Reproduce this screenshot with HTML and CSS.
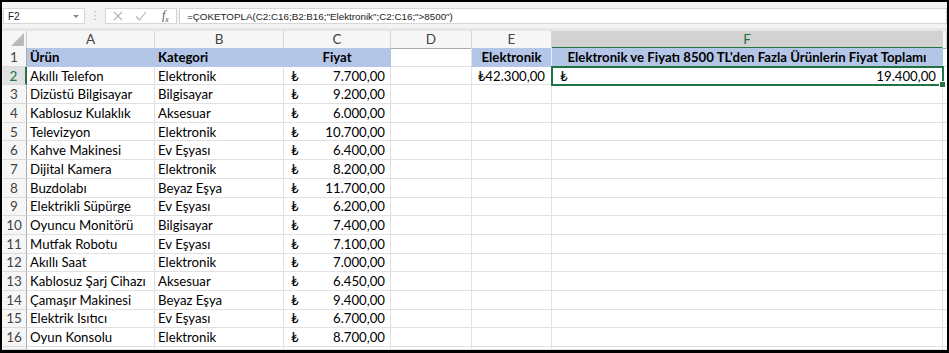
FILE: index.html
```html
<!DOCTYPE html>
<html lang="tr">
<head>
    <meta charset="UTF-8">
    <meta name="viewport" content="width=device-width, initial-scale=1.0">
    <title>ÇOKETOPLA</title>
    <link rel="stylesheet" href="styles.css">
</head>
<body>
<div class="window">
    <div class="formulaBar">
        <div class="nameBox"><span>F2</span><span class="arrow"></span></div>
        <div class="grip">⋮</div>
        <div class="fxBox">
            <svg class="btn" width="10" height="10" viewBox="0 0 10 10"><path d="M1 1 L9 9 M9 1 L1 9" stroke="#b3b3b3" stroke-width="1.1" fill="none"/></svg>
            <svg class="btn" width="12" height="10" viewBox="0 0 12 10"><path d="M1 5.5 L4.5 9 L11 1" stroke="#b3b3b3" stroke-width="1.1" fill="none"/></svg>
            <span class="fx"><i>f</i><sub>x</sub></span>
        </div>
        <div class="formula">=ÇOKETOPLA(C2:C16;B2:B16;"Elektronik";C2:C16;"&gt;8500")</div>
    </div>

    <div class="sheet">
        <div class="row head">
            <div class="corner"><svg width="13" height="13" viewBox="0 0 13 13"><polygon points="13,0 13,13 0,13" fill="#b9b9b9"/></svg></div>
            <div class="colHead">A</div>
            <div class="colHead">B</div>
            <div class="colHead">C</div>
            <div class="colHead">D</div>
            <div class="colHead">E</div>
            <div class="colHead sel">F</div>
            <div class="colHead"></div>
        </div>

        <div class="row">
            <div class="rowHead">1</div>
            <div class="cell fill bold">Ürün</div>
            <div class="cell fill bold">Kategori</div>
            <div class="cell fill bold center">Fiyat</div>
            <div class="cell"></div>
            <div class="cell fill bold center seam">Elektronik</div>
            <div class="cell fill bold center">Elektronik ve Fiyatı 8500 TL'den Fazla Ürünlerin Fiyat Toplamı</div>
            <div class="cell"></div>
        </div>
        <div class="row">
            <div class="rowHead sel">2</div>
            <div class="cell">Akıllı Telefon</div>
            <div class="cell">Elektronik</div>
            <div class="cell money"><span>₺</span><span>7.700,00</span></div>
            <div class="cell"></div>
            <div class="cell right">₺42.300,00</div>
            <div class="cell money active"><span>₺</span><span>19.400,00</span></div>
            <div class="cell"></div>
        </div>
        <div class="row">
            <div class="rowHead">3</div>
            <div class="cell">Dizüstü Bilgisayar</div>
            <div class="cell">Bilgisayar</div>
            <div class="cell money"><span>₺</span><span>9.200,00</span></div>
            <div class="cell"></div><div class="cell"></div><div class="cell"></div><div class="cell"></div>
        </div>
        <div class="row">
            <div class="rowHead">4</div>
            <div class="cell">Kablosuz Kulaklık</div>
            <div class="cell">Aksesuar</div>
            <div class="cell money"><span>₺</span><span>6.000,00</span></div>
            <div class="cell"></div><div class="cell"></div><div class="cell"></div><div class="cell"></div>
        </div>
        <div class="row">
            <div class="rowHead">5</div>
            <div class="cell">Televizyon</div>
            <div class="cell">Elektronik</div>
            <div class="cell money"><span>₺</span><span>10.700,00</span></div>
            <div class="cell"></div><div class="cell"></div><div class="cell"></div><div class="cell"></div>
        </div>
        <div class="row">
            <div class="rowHead">6</div>
            <div class="cell">Kahve Makinesi</div>
            <div class="cell">Ev Eşyası</div>
            <div class="cell money"><span>₺</span><span>6.400,00</span></div>
            <div class="cell"></div><div class="cell"></div><div class="cell"></div><div class="cell"></div>
        </div>
        <div class="row">
            <div class="rowHead">7</div>
            <div class="cell">Dijital Kamera</div>
            <div class="cell">Elektronik</div>
            <div class="cell money"><span>₺</span><span>8.200,00</span></div>
            <div class="cell"></div><div class="cell"></div><div class="cell"></div><div class="cell"></div>
        </div>
        <div class="row">
            <div class="rowHead">8</div>
            <div class="cell">Buzdolabı</div>
            <div class="cell">Beyaz Eşya</div>
            <div class="cell money"><span>₺</span><span>11.700,00</span></div>
            <div class="cell"></div><div class="cell"></div><div class="cell"></div><div class="cell"></div>
        </div>
        <div class="row">
            <div class="rowHead">9</div>
            <div class="cell">Elektrikli Süpürge</div>
            <div class="cell">Ev Eşyası</div>
            <div class="cell money"><span>₺</span><span>6.200,00</span></div>
            <div class="cell"></div><div class="cell"></div><div class="cell"></div><div class="cell"></div>
        </div>
        <div class="row">
            <div class="rowHead">10</div>
            <div class="cell">Oyuncu Monitörü</div>
            <div class="cell">Bilgisayar</div>
            <div class="cell money"><span>₺</span><span>7.400,00</span></div>
            <div class="cell"></div><div class="cell"></div><div class="cell"></div><div class="cell"></div>
        </div>
        <div class="row">
            <div class="rowHead">11</div>
            <div class="cell">Mutfak Robotu</div>
            <div class="cell">Ev Eşyası</div>
            <div class="cell money"><span>₺</span><span>7.100,00</span></div>
            <div class="cell"></div><div class="cell"></div><div class="cell"></div><div class="cell"></div>
        </div>
        <div class="row">
            <div class="rowHead">12</div>
            <div class="cell">Akıllı Saat</div>
            <div class="cell">Elektronik</div>
            <div class="cell money"><span>₺</span><span>7.000,00</span></div>
            <div class="cell"></div><div class="cell"></div><div class="cell"></div><div class="cell"></div>
        </div>
        <div class="row">
            <div class="rowHead">13</div>
            <div class="cell">Kablosuz Şarj Cihazı</div>
            <div class="cell">Aksesuar</div>
            <div class="cell money"><span>₺</span><span>6.450,00</span></div>
            <div class="cell"></div><div class="cell"></div><div class="cell"></div><div class="cell"></div>
        </div>
        <div class="row">
            <div class="rowHead">14</div>
            <div class="cell">Çamaşır Makinesi</div>
            <div class="cell">Beyaz Eşya</div>
            <div class="cell money"><span>₺</span><span>9.400,00</span></div>
            <div class="cell"></div><div class="cell"></div><div class="cell"></div><div class="cell"></div>
        </div>
        <div class="row">
            <div class="rowHead">15</div>
            <div class="cell">Elektrik Isıtıcı</div>
            <div class="cell">Ev Eşyası</div>
            <div class="cell money"><span>₺</span><span>6.700,00</span></div>
            <div class="cell"></div><div class="cell"></div><div class="cell"></div><div class="cell"></div>
        </div>
        <div class="row">
            <div class="rowHead">16</div>
            <div class="cell">Oyun Konsolu</div>
            <div class="cell">Elektronik</div>
            <div class="cell money"><span>₺</span><span>8.700,00</span></div>
            <div class="cell"></div><div class="cell"></div><div class="cell"></div><div class="cell"></div>
        </div>
        <div class="row tail">
            <div class="rowHead"></div>
            <div class="cell"></div><div class="cell"></div><div class="cell"></div><div class="cell"></div>
            <div class="cell"></div><div class="cell"></div><div class="cell"></div>
        </div>
    </div>
</div>
</body>
</html>
```

FILE: styles.css
```css
body{
    margin: 0;
    font-family: Lato, "DejaVu Sans", sans-serif;
    color: #000;
}

.window{
    width: 949px;
    height: 353px;
    box-sizing: border-box;
    border: 2px solid #000;
    border-bottom-width: 3px;
    display: flex;
    flex-direction: column;
    overflow: hidden;
    background-color: #fff;
}

/* formula bar */
.formulaBar{
    height: 29px;
    flex: none;
    box-sizing: border-box;
    padding: 6px 0 0 1px;
    background-color: #f3f3f3;
    border-bottom: 3px solid #e6e6e6;
    display: flex;
    align-items: flex-start;
    font-family: "Liberation Sans", Arial, sans-serif;
    font-size: 10px;
    color: #222;
}

.nameBox, .fxBox, .formula{
    height: 16px;
    box-sizing: border-box;
    background-color: #fff;
    border: 1px solid #d6d6d6;
    display: flex;
    align-items: center;
}

.nameBox{
    width: 82px;
    padding: 0 5px 0 4px;
    justify-content: space-between;
}

.arrow{
    width: 0;
    height: 0;
    border-left: 3px solid transparent;
    border-right: 3px solid transparent;
    border-top: 3px solid #8a8a8a;
}

.grip{
    width: 20px;
    text-align: center;
    color: #b5b5b5;
    font-family: "DejaVu Sans", sans-serif;
    font-size: 11px;
    line-height: 16px;
}

.fxBox{
    width: 72px;
    padding-left: 7px;
    gap: 12px;
}

.fx{
    font-family: "Liberation Serif", serif;
    font-size: 12px;
    color: #555;
    margin-left: 3px;
}

.fx sub{
    font-size: 8px;
    font-style: italic;
}

.formula{
    flex: 1;
    margin-left: 2px;
    padding-left: 7px;
    font-size: 9.8px;
}

/* sheet */
.sheet{
    flex: 1;
    display: flex;
    flex-direction: column;
}

.row{
    display: grid;
    grid-template-columns: 25px 128px 129px 107px 81px 80px 391px 1fr;
    height: 18.7px;
    flex: none;
}

.row.head{
    height: 17px;
}

.row.tail{
    flex: 1;
}

.corner, .colHead, .rowHead{
    background-color: #f6f6f6;
    color: #444;
    font-size: 13.5px;
    box-sizing: border-box;
}

.corner{
    border-right: 1px solid #d0d0d0;
    border-bottom: 1px solid #ababab;
    display: flex;
    align-items: flex-end;
    justify-content: flex-end;
    padding: 0 2px 2px 0;
}

.colHead{
    border-right: 1px solid #d4d4d4;
    border-bottom: 1px solid #ababab;
    text-align: center;
    line-height: 16px;
}

.colHead.sel{
    background-color: #d2d2d2;
    color: #217346;
    border-bottom: 2px solid #217346;
}

.rowHead{
    border-right: 1px solid #ababab;
    border-bottom: 1px solid #dadada;
    text-align: center;
    display: flex;
    align-items: center;
    justify-content: center;
}

.rowHead.sel{
    background-color: #e1e1e1;
    color: #217346;
    border-right: 2px solid #217346;
}

.cell{
    box-sizing: border-box;
    border-right: 1px solid #e1e1e1;
    border-bottom: 1px solid #e1e1e1;
    padding: 0 3px;
    font-size: 13.2px;
    white-space: nowrap;
    overflow: hidden;
    display: flex;
    align-items: center;
}

.fill{
    background-color: #b4c6e7;
    border-color: #b4c6e7;
}

.fill.seam{
    border-right-color: #e4e9f3;
}

.bold{
    font-weight: bold;
}

.center{
    justify-content: center;
}

.right{
    justify-content: flex-end;
    padding-right: 6px;
}

.money{
    justify-content: space-between;
    padding: 0 5px 0 7px;
}

.active{
    position: relative;
    overflow: visible;
    outline: 2px solid #217346;
    outline-offset: -1px;
    padding: 0 6px 0 8px;
    z-index: 1;
}

.active::after{
    content: "";
    position: absolute;
    right: -4px;
    bottom: -4px;
    width: 5px;
    height: 5px;
    background-color: #217346;
    border: 1px solid #fff;
}
```
